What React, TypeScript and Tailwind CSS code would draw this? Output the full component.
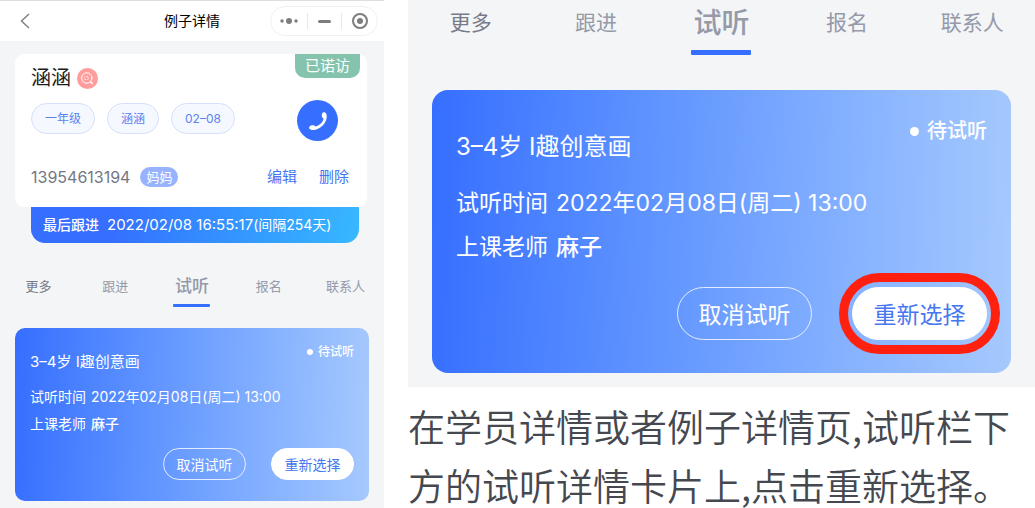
import React from 'react';
import clsx from 'clsx';

type Size = 'small' | 'large';

const TABS = ['更多', '跟进', '试听', '报名', '联系人'];
const TAGS = ['一年级', '涵涵', '02–08'];

const BackIcon = () => (
  <svg width="10" height="16" viewBox="0 0 10 16" fill="none" stroke="#7d7d7d" strokeWidth="1.4">
    <path d="M9 1 1.5 8 9 15"/>
  </svg>
);

const SearchBadge = () => (
  <svg width="21" height="21" viewBox="0 0 21 21" fill="none" stroke="#fff" strokeLinecap="round">
    <circle cx="10.5" cy="10.5" r="10.5" fill="#ff9c9c" stroke="none"/>
    <circle cx="9.8" cy="10" r="5.2" strokeWidth="1"/>
    <path d="m13.6 14 1.7 1.5" strokeWidth="1.5"/>
    <path d="M7.6 9.3h.6M9.8 8.6c.9-.5 1.7.2 1.1 1 .8.5.7 1.7-.3 2M7.8 11.5h.8" strokeWidth=".8"/>
  </svg>
);

const PhoneIcon = () => (
  <svg width="20" height="20" viewBox="0 0 20 20" fill="#fff">
    <path d="M15.6 1.2c1.5-.3 2.6.6 3 2.400.7 3.600-.6 7.500-3.600 10.600-3.300 3.400-7.600 5.200-11.200 4.700-1.800-.2-2.900-1.100-2.700-2.400.2-1.200 1.400-2 3-2.200 1.500-.2 2.600.3 3.100 1.300 2.400-.5 4.500-1.700 6.100-3.500 1.300-1.500 2.100-3 2.300-4.600-1.100-.5-1.900-1.500-1.800-3 .1-1.700.8-3.100 1.800-3.300z"/>
  </svg>
);

const Header = () => (
  <header className="grid grid-cols-[1fr_auto_1fr] items-center bg-white border-t border-[#dedede] h-[41px] px-[6px]">
    <button aria-label="返回" className="justify-self-start pl-[14px]">
      <BackIcon/>
    </button>
    <h1 className="text-sm text-black whitespace-nowrap">例子详情</h1>
    <div className="justify-self-end flex items-center h-[30px] rounded-full border border-[#f0f0f0]">
      <button aria-label="更多操作" className="w-9 flex justify-center">
        <svg width="18" height="6" viewBox="0 0 18 6" fill="#7d7d7d">
          <circle cx="2" cy="3" r="1.7"/>
          <circle cx="9" cy="3" r="3"/>
          <circle cx="16" cy="3" r="1.7"/>
        </svg>
      </button>
      <span className="w-px h-4 bg-[#e8e8e8]"/>
      <button aria-label="最小化" className="w-[33px] flex justify-center">
        <span className="w-[13px] h-[3px] rounded-full bg-[#7d7d7d]"/>
      </button>
      <span className="w-px h-4 bg-[#e8e8e8]"/>
      <button aria-label="关闭" className="w-[35px] flex justify-center">
        <svg width="16" height="16" viewBox="0 0 16 16" fill="none" stroke="#7d7d7d" strokeWidth="2">
          <circle cx="8" cy="8" r="7"/>
          <circle cx="8" cy="8" r="3" fill="#7d7d7d" stroke="none"/>
        </svg>
      </button>
    </div>
  </header>
);

const StudentCard = () => (
  <div className="mr-[2px]">
    <section className="relative bg-white rounded-[9px] pt-[10px] pb-5 pl-4 pr-[18px]">
      <span className="absolute top-0 right-[7px] px-[10px] rounded-b-[10px] bg-[#85c4ac] text-white text-[15px] leading-6">
        已诺访
      </span>
      <div className="flex items-center gap-[6px]">
        <h2 className="text-xl leading-7 text-[#1b1b1b]">涵涵</h2>
        <SearchBadge/>
      </div>
      <div className="flex items-start justify-between mt-2 pr-[11px]">
        <ul className="flex gap-3 pt-[3px]">
          {TAGS.map(tag => (
            <li
              key={tag}
              className="px-[13px] rounded-full border border-[#d5e0fd] bg-[#f5f8ff] text-[#5a83f0] text-xs leading-[29px]"
            >
              {tag}
            </li>
          ))}
        </ul>
        <button aria-label="拨打电话" className="size-[41px] rounded-full bg-[#366eff] flex items-center justify-center">
          <PhoneIcon/>
        </button>
      </div>
      <div className="flex items-center mt-[26px]">
        <span className="text-base leading-5 text-[#747784]">13954613194</span>
        <span className="ml-[10px] px-[6px] rounded-full bg-[#97b3ff] text-white text-[13px] leading-5">妈妈</span>
        <a href="#edit" className="ml-auto text-[15px] leading-5 text-[#4676f0]">编辑</a>
        <a href="#delete" className="ml-[22px] text-[15px] leading-5 text-[#4676f0]">删除</a>
      </div>
    </section>
    <p className="ml-4 mr-2 pl-3 rounded-b-[14px] bg-linear-100 from-[#366eff] from-25% to-[#38b8ff] text-white text-[15px] leading-9 whitespace-nowrap">
      <span className="text-sm font-medium leading-9 mr-2">最后跟进</span>
      2022/02/08 16:55:17<span className="text-sm leading-9">(间隔254天)</span>
    </p>
  </div>
);

const Tabs = ({ size }: { size: Size }) => {
  const large = size === 'large';
  return (
    <nav className="grid grid-cols-5">
      {TABS.map((tab, i) => (
        <button
          key={tab}
          className={clsx(
            'flex flex-col items-center whitespace-nowrap',
            i === 0 ? 'text-[#777a88]' : 'text-[#9599a8]',
            large ? 'h-[55px] text-[21px] leading-[46px]' : 'h-[38px] text-[13px] leading-9',
          )}
        >
          {tab === '试听' ? (
            <>
              <span className={clsx('font-medium', large ? 'text-[28px]' : 'text-[17px]')}>{tab}</span>
              <span
                className={clsx(
                  'mt-auto rounded-[1px] bg-[#366eff] shrink-0',
                  large ? 'w-[60px] h-[5px]' : 'w-[37px] h-[3px]',
                )}
              />
            </>
          ) : tab}
        </button>
      ))}
    </nav>
  );
};

const TrialCard = ({ size }: { size: Size }) => {
  const large = size === 'large';
  const button = clsx(
    'rounded-full border',
    large ? 'w-[135px] h-[53px] pt-1 text-[23px]' : 'w-[83px] h-8 pt-[2px] text-sm',
  );
  const row = large ? 'gap-2 text-[23px] leading-8' : 'gap-[5px] text-sm leading-5';

  return (
    <section
      className={clsx(
        'bg-linear-92 from-[#366eff] to-[#a6c9fd] text-white whitespace-nowrap',
        large ? 'rounded-[16px] pt-[29px] pb-[33px] px-6' : 'rounded-[10px] pt-4 pb-[21px] px-[15px]',
      )}
    >
      <div className="flex items-start justify-between">
        <h3 className={large ? 'mt-3 text-2xl leading-8' : 'mt-2 text-[15px] leading-5'}>
          3–4岁 I趣创意画
        </h3>
        <span
          className={clsx(
            'flex items-center font-medium',
            large ? 'gap-2 text-xl leading-6' : 'gap-[5px] text-xs leading-4',
          )}
        >
          <i className={clsx('rounded-full bg-white', large ? 'size-[9px]' : 'size-[6px]')}/>
          待试听
        </span>
      </div>
      <dl>
        <div className={clsx('flex', row, large ? 'mt-6' : 'mt-[15px]')}>
          <dt>试听时间</dt>
          <dd>2022年02月08日(周二) 13:00</dd>
        </div>
        <div className={clsx('flex', row, large ? 'mt-3' : 'mt-[7px]')}>
          <dt>上课老师</dt>
          <dd className="font-medium">麻子</dd>
        </div>
      </dl>
      <div className={clsx('flex justify-end', large ? 'mt-6 gap-10' : 'mt-[14px] gap-[25px]')}>
        <button className={clsx(button, 'border-white/80')}>取消试听</button>
        <div className="relative">
          <button className={clsx(button, 'border-white bg-white text-[#4676f0]')}>重新选择</button>
          {large && (
            <span className="absolute -inset-x-[13px] -inset-y-[14px] rounded-full border-[9px] border-[#ff2010] pointer-events-none"/>
          )}
        </div>
      </div>
    </section>
  );
};

const App = () => (
  <div className="grid grid-cols-[384fr_627fr] gap-6 bg-white font-['Inter','Noto_Sans_CJK_SC',sans-serif]">
    <main className="bg-[#f3f5f7]">
      <Header/>
      <div className="px-[15px] pt-[13px]">
        <StudentCard/>
      </div>
      <div className="pt-[25px]">
        <Tabs size="small"/>
      </div>
      <div className="px-[15px] pt-[22px] pb-[7px]">
        <TrialCard size="small"/>
      </div>
    </main>
    <aside>
      <div className="bg-[#f3f5f7] pb-[14px]">
        <Tabs size="large"/>
        <div className="px-6 pt-[35px]">
          <TrialCard size="large"/>
        </div>
      </div>
      <p className="mt-[10px] text-[37px] leading-[59px] font-[350] text-[#45484f] font-['Noto_Sans_CJK_SC',sans-serif]">
        在学员详情或者例子详情页,试听栏下方的试听详情卡片上,点击重新选择。
      </p>
    </aside>
  </div>
);

export default App;
